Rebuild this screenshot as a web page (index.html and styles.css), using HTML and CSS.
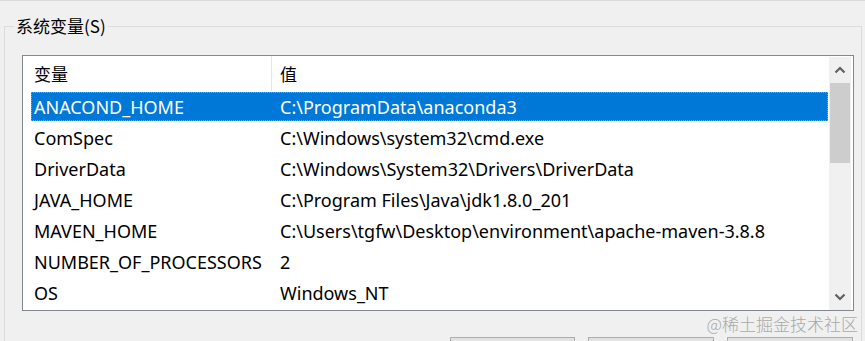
FILE: index.html
```html
<!DOCTYPE html>
<html lang="zh-CN">
<head>
<meta charset="utf-8">
<title>系统变量</title>
<link rel="stylesheet" href="styles.css">
</head>
<body>
<div class="page">
  <div class="topline"></div>
  <fieldset class="group">
    <legend class="group-title">系统变量(S)</legend>
    <div class="listbox">
      <div class="list-main">
        <div class="list-head">
          <div class="hcell hcell-name">变量</div>
          <div class="hcell hcell-value">值</div>
        </div>
        <div class="rows">
          <div class="row selected"><span class="c-name">ANACOND_HOME</span><span class="c-value">C:\ProgramData\anaconda3</span></div>
          <div class="row"><span class="c-name">ComSpec</span><span class="c-value">C:\Windows\system32\cmd.exe</span></div>
          <div class="row"><span class="c-name">DriverData</span><span class="c-value">C:\Windows\System32\Drivers\DriverData</span></div>
          <div class="row"><span class="c-name">JAVA_HOME</span><span class="c-value">C:\Program Files\Java\jdk1.8.0_201</span></div>
          <div class="row"><span class="c-name">MAVEN_HOME</span><span class="c-value">C:\Users\tgfw\Desktop\environment\apache-maven-3.8.8</span></div>
          <div class="row"><span class="c-name">NUMBER_OF_PROCESSORS</span><span class="c-value">2</span></div>
          <div class="row"><span class="c-name">OS</span><span class="c-value">Windows_NT</span></div>
        </div>
      </div>
      <div class="vscroll">
        <div class="arrow">
          <svg width="12" height="8" viewBox="0 0 12 8"><path d="M1.5 6.5 L6 2 L10.5 6.5" fill="none" stroke="#606060" stroke-width="2.2"/></svg>
        </div>
        <div class="track">
          <div class="thumb"></div>
        </div>
        <div class="arrow">
          <svg width="12" height="8" viewBox="0 0 12 8"><path d="M1.5 1.5 L6 6 L10.5 1.5" fill="none" stroke="#606060" stroke-width="2.2"/></svg>
        </div>
      </div>
    </div>
    <div class="buttons">
      <div class="btn"></div>
      <div class="btn"></div>
      <div class="btn"></div>
    </div>
  </fieldset>
  <div class="watermark">@稀土掘金技术社区</div>
</div>
</body>
</html>
```

FILE: styles.css
```css
html, body {
  margin: 0;
  padding: 0;
  background: #f0f0f0;
  overflow: hidden;
}
body {
  width: 865px;
  height: 341px;
  font-family: "Noto Sans", "Noto Sans CJK SC", sans-serif;
  font-size: 18px;
  color: #000;
}
.page {
  position: relative;
  width: 865px;
  height: 341px;
  overflow: hidden;
}
.topline {
  height: 1px;
  background: #dadada;
  margin-bottom: 13px;
}
.group {
  margin: 0 3px 0 4px;
  padding: 0;
  border: 1px solid #dcdcdc;
  height: 400px;
  min-width: 0;
}
.group-title {
  margin-left: 9px;
  padding: 0 2px;
  font-family: "Noto Sans CJK SC", sans-serif;
  font-size: 17px;
  line-height: 24px;
  color: #000;
}
.listbox {
  margin: 17px 0 0 17px;
  width: 830px;
  height: 254px;
  border: 1px solid #828790;
  background: #fff;
  display: flex;
}
.list-main {
  flex: 1;
  min-width: 0;
}
.list-head {
  display: flex;
  height: 35px;
}
.hcell {
  display: flex;
  align-items: center;
  font-family: "Noto Sans CJK SC", sans-serif;
  font-size: 17px;
}
.hcell-name {
  width: 237px;
  padding-left: 11px;
  border-right: 1px solid #e5e5e5;
}
.hcell-value {
  padding-left: 8px;
}
.rows {
  padding: 1px 1px 0 8px;
}
.row {
  display: flex;
  align-items: center;
  height: 29px;
  margin-bottom: 2px;
  white-space: nowrap;
}
.row.selected {
  background: #0078d7;
  color: #fff;
  outline: 1px dotted #c99a5b;
  outline-offset: -1px;
}
.c-name {
  width: 246px;
  padding-left: 3px;
}
.vscroll {
  width: 22px;
  margin: 1px 2px 0 0;
  background: #f0f0f0;
  display: flex;
  flex-direction: column;
}
.arrow {
  height: 26px;
  display: flex;
  align-items: center;
  justify-content: center;
}
.track {
  flex: 1;
  padding: 0 1px;
}
.thumb {
  height: 80px;
  background: #cdcdcd;
}
.buttons {
  display: flex;
  justify-content: flex-end;
  gap: 13px;
  margin-top: 26px;
  width: 848px;
}
.btn {
  width: 124px;
  height: 24px;
  border: 1px solid #adadad;
  background: #e1e1e1;
}
.btn:first-child {
  width: 123px;
}
.watermark {
  position: absolute;
  right: 7px;
  top: 312px;
  font-family: "Noto Sans CJK SC", sans-serif;
  font-weight: 300;
  font-size: 17px;
  line-height: 24px;
  color: #a9a9a9;
}
```
